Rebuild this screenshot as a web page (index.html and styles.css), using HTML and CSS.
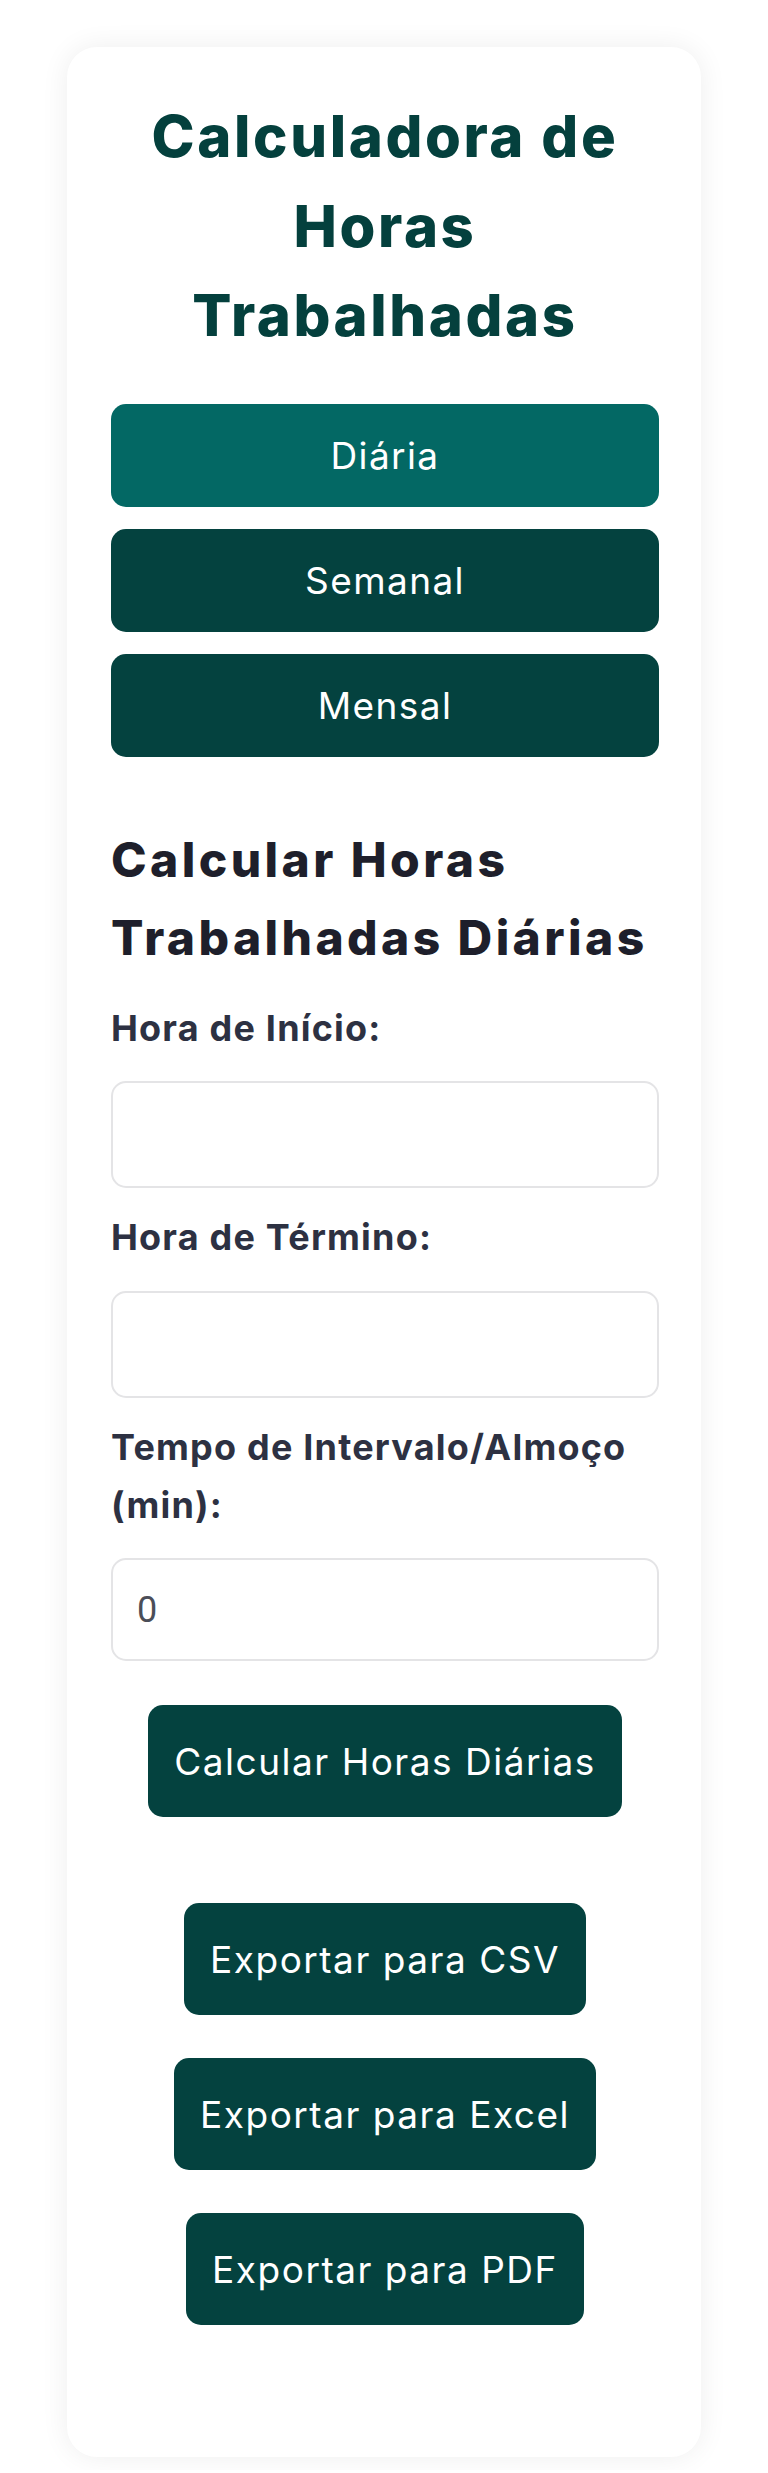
FILE: index.html
```html
<!DOCTYPE html>
<html lang="pt-BR">
<head>
<meta charset="utf-8">
<title>Calculadora de Horas Trabalhadas</title>
<link rel="stylesheet" href="styles.css">
</head>
<body>
<main class="card">
  <h1 class="title">Calculadora de Horas Trabalhadas</h1>
  <nav class="tabs">
    <button class="tab tab-active">Diária</button>
    <button class="tab">Semanal</button>
    <button class="tab">Mensal</button>
  </nav>
  <section class="form">
    <h2 class="heading">Calcular Horas Trabalhadas Diárias</h2>
    <label class="label" for="inicio">Hora de Início:</label>
    <input class="field field-time" id="inicio" type="text" value="">
    <label class="label" for="termino">Hora de Término:</label>
    <input class="field field-time" id="termino" type="text" value="">
    <label class="label" for="intervalo">Tempo de Intervalo/Almoço (min):</label>
    <input class="field field-num" id="intervalo" type="text" value="0">
    <div class="actions">
      <button class="btn btn-calc">Calcular Horas Diárias</button>
    </div>
  </section>
  <div class="exports">
    <button class="btn">Exportar para CSV</button>
    <button class="btn">Exportar para Excel</button>
    <button class="btn">Exportar para PDF</button>
  </div>
</main>
</body>
</html>
```
FILE: styles.css
```css
* { box-sizing: border-box; }
html, body { margin: 0; padding: 0; background: #ffffff; }
body {
  font-family: Inter, "Noto Sans", sans-serif;
  padding-top: 47px;
  padding-bottom: 13px;
}
.card {
  width: 634px;
  margin: 0 auto;
  background: #ffffff;
  border-radius: 30px;
  box-shadow: 0 0 28px rgba(0, 0, 0, 0.07);
  padding: 45px 42px 132px 44px;
  display: flex;
  flex-direction: column;
}
.title {
  margin: 0;
  text-align: center;
  color: #04403d;
  font-size: 58px;
  font-weight: 800;
  letter-spacing: 2.6px;
  line-height: 89.6px;
  padding: 0 20px;
}
.tabs {
  margin-top: 43px;
  display: flex;
  flex-direction: column;
  gap: 22px;
}
.tab {
  height: 103px;
  border: none;
  border-radius: 15px;
  background: #04423f;
  color: #ffffff;
  font-family: Inter, "Noto Sans", sans-serif;
  font-size: 37px;
  font-weight: 400;
  letter-spacing: 1.4px;
  padding: 0;
}
.tab-active { background: #036864; }
.form {
  margin-top: 64px;
  display: flex;
  flex-direction: column;
}
.heading {
  margin: 0 0 23px 0;
  color: #1e1f2b;
  font-size: 48px;
  font-weight: 800;
  letter-spacing: 3.4px;
  line-height: 78px;
}
.label {
  display: block;
  color: #2d3142;
  font-size: 36px;
  font-weight: 700;
  letter-spacing: 1.2px;
  line-height: 57.6px;
  margin-bottom: 24px;
}
.field {
  display: block;
  width: 100%;
  border: 2px solid #e4e4e6;
  border-radius: 15px;
  background: #ffffff;
  padding: 0 24px;
  font-family: Roboto, "Liberation Sans", sans-serif;
  font-size: 36px;
  color: #4b4e58;
  margin-bottom: 21px;
}
.field-time { height: 107px; }
.field-num { height: 103px; margin-bottom: 44px; }
.actions { display: flex; justify-content: center; }
.btn {
  height: 112px;
  border: none;
  border-radius: 15px;
  background: #04423f;
  color: #ffffff;
  font-family: Inter, "Noto Sans", sans-serif;
  font-size: 37px;
  font-weight: 400;
  letter-spacing: 1.5px;
  padding: 0 26px;
}
.exports {
  margin-top: 86px;
  display: flex;
  flex-direction: column;
  align-items: center;
  gap: 43px;
}
```
